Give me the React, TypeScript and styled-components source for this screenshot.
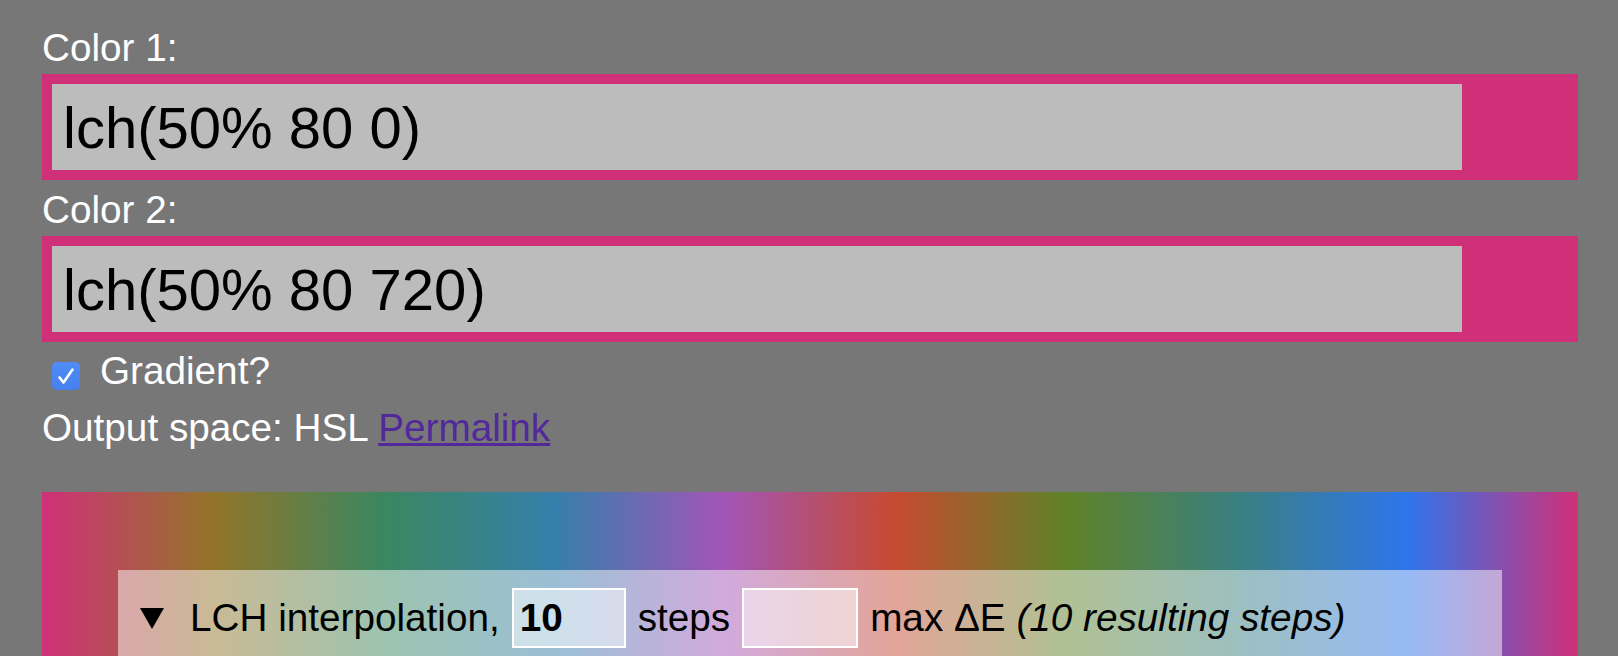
import { createGlobalStyle, styled } from 'styled-components'

const GlobalStyle = createGlobalStyle`
    html, body {
        margin: 0;
        padding: 0;
        background: #777;
    }

    body {
        font-family: 'Liberation Sans', Arial, Helvetica, sans-serif;
        font-size: 38.7px;
        color: white;
        overflow: hidden;
    }
`

// lch(50% 80 h) for h = 0, 80, 160 ... 720, gamut mapped
const stops = [
    '#d03078',
    '#93742a',
    '#3a875f',
    '#357fab',
    '#a355b7',
    '#c64a30',
    '#5f8228',
    '#3a8080',
    '#2e75ec',
    '#d03078',
]

const Page = styled.main`
    padding: 18px 40px 0 42px;
`

const Label = styled.label`
    display: block;
    line-height: 44px;
    margin: 8px 0 4px;
`

const Swatch = styled.div<{ color: string }>`
    background: ${({ color }) => color};
    padding: 10px;
`

const ColorInput = styled.input`
    display: block;
    box-sizing: border-box;
    width: 1410px;
    height: 86px;
    padding: 0 11px;
    border: 0;
    outline: none;
    background: #bcbcbc;
    color: black;
    font: inherit;
    font-size: 1.5em;
`

const CheckRow = styled.label`
    display: flex;
    align-items: flex-start;
    height: 44px;
    line-height: 44px;
    margin-top: 7px;
`

const CheckBox = styled.span`
    display: block;
    width: 28px;
    height: 28px;
    margin: 13px 20px 0 10px;
    border-radius: 5px;
    background: linear-gradient(#4f8cf6, #4680ef);

    svg {
        display: block;
        width: 28px;
        height: 28px;
    }
`

const Output = styled.p`
    margin: 13px 0 0;
    line-height: 44px;

    a {
        color: #51299a;
    }
`

const Gradient = styled.section<{ colors: string[] }>`
    margin-top: 42px;
    padding: 78px 76px 78px 76px;
    background: linear-gradient(to right, ${({ colors }) => colors.join(', ')});
`

const Panel = styled.details`
    background: rgba(255, 255, 255, 0.5);
    color: black;
    padding: 18px 20px 18px 22px;
    min-height: 200px;
`

const Summary = styled.summary`
    display: flex;
    align-items: center;
    gap: 12px;
    height: 60px;
    line-height: 44px;
    list-style: none;
    white-space: nowrap;

    &::-webkit-details-marker {
        display: none;
    }
`

const Marker = styled.span`
    width: 0;
    height: 0;
    margin-right: 14px;
    border-left: 12px solid transparent;
    border-right: 12px solid transparent;
    border-top: 21px solid black;
`

const StepInput = styled.input<{ w: number }>`
    box-sizing: border-box;
    width: ${({ w }) => `${w}px`};
    height: 60px;
    padding: 0 6px;
    border: 2px solid white;
    outline: none;
    background: rgba(255, 255, 255, 0.5);
    color: black;
    font: inherit;
    font-weight: bold;
`

export default function App() {
    return (
        <>
            <GlobalStyle />
            <Page>
                <Label htmlFor="color1">Color 1:</Label>
                <Swatch color="#d03078">
                    <ColorInput id="color1" defaultValue="lch(50% 80 0)" />
                </Swatch>
                <Label htmlFor="color2">Color 2:</Label>
                <Swatch color="#d03078">
                    <ColorInput id="color2" defaultValue="lch(50% 80 720)" />
                </Swatch>
                <CheckRow>
                    <CheckBox>
                        <svg viewBox="0 0 28 28" fill="none">
                            <path
                                d="M7.5 15.5 L11.5 20.5 L20.5 7.5"
                                stroke="white"
                                strokeWidth="2.6"
                                strokeLinecap="round"
                                strokeLinejoin="round"
                            />
                        </svg>
                    </CheckBox>
                    Gradient?
                </CheckRow>
                <Output>
                    Output space: HSL <a href="#">Permalink</a>
                </Output>
                <Gradient colors={stops}>
                    <Panel open>
                        <Summary>
                            <Marker />
                            <span>LCH interpolation,</span>
                            <StepInput w={114} defaultValue="10" />
                            <span>steps</span>
                            <StepInput w={116} defaultValue="" />
                            <span>
                                max ΔE <i>(10 resulting steps)</i>
                            </span>
                        </Summary>
                    </Panel>
                </Gradient>
            </Page>
        </>
    )
}
